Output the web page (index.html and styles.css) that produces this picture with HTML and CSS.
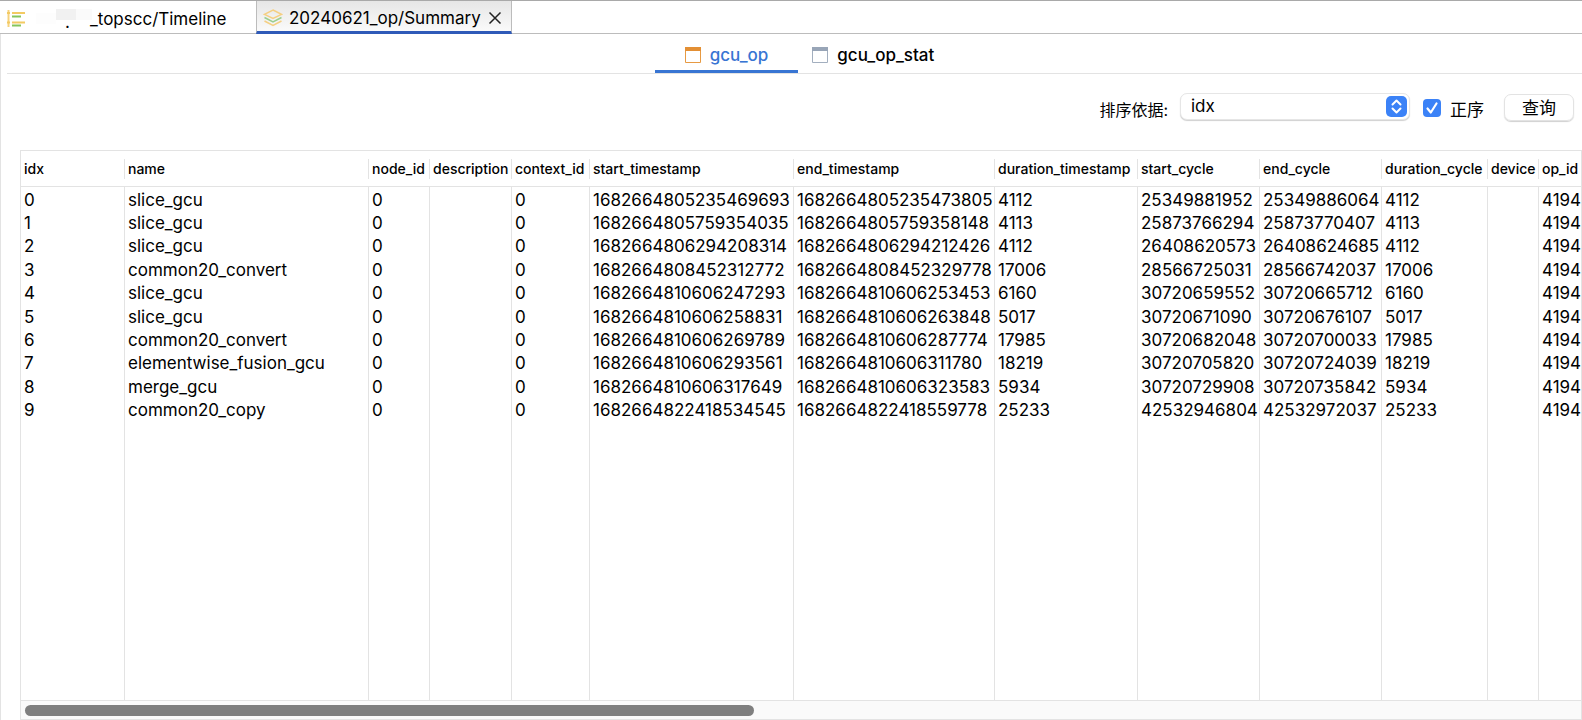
FILE: index.html
```html
<!DOCTYPE html>
<html lang="zh-CN">
<head>
<meta charset="utf-8">
<title>Summary</title>
<link rel="stylesheet" href="styles.css">
</head>
<body>
<nav class="files">
  <div class="file">
    <svg class="file-icon" width="18" height="18" viewBox="0 0 18 18" fill="none" stroke-width="2"><path d="M1.500 0v17" stroke="#f6d27c"/><path d="M0 3h3M5 3h13M0 12.500h3M5 12.500h13" stroke="#f3ca63"/><path d="M5 6.500h9M5 15.500h9" stroke="#86c55d"/></svg>
    <span class="redacted"><span class="patch"></span><span class="dot">.</span></span>
    <button class="file-name" type="button">_topscc/Timeline</button>
  </div>
  <div class="file active">
    <svg class="file-icon" width="20" height="18" viewBox="0 0 20 18" fill="none" stroke-width="1.500"><path d="M10 1l8.500 4.300L10 9.500 1.500 5.300z" stroke="#f5cf82"/><path d="M1.500 8.500L10 13l8.500-4.500" stroke="#9bce8e"/><path d="M1.500 12L10 16.500l8.500-4.500" stroke="#f5cf82"/></svg>
    <button class="file-name" type="button">20240621_op/Summary</button>
    <button class="close" type="button" aria-label="Close"><svg width="14" height="14" viewBox="0 0 14 14" fill="none" stroke="#222" stroke-width="1.500"><path d="M1.500 1.500l11 11M12.500 1.500l-11 11"/></svg></button>
  </div>
</nav>
<main class="panel">
  <nav class="views">
    <button class="view selected" type="button"><svg width="16" height="16" viewBox="0 0 16 16" fill="none"><path d="M.5 1h15v14.500H.5z" stroke="#e79a43"/><path d="M0 0h16v4H0z" fill="#e38f34"/></svg>gcu_op</button>
    <button class="view" type="button"><svg width="16" height="16" viewBox="0 0 16 16" fill="none"><path d="M.5 1h15v14.500H.5z" stroke="#a3afbf"/><path d="M0 0h16v4H0z" fill="#98a5b7"/></svg>gcu_op_stat</button>
  </nav>
  <form class="query">
    <label class="sort-label" for="sort">排序依据:</label>
    <div class="select-box">
      <select id="sort"><option>idx</option></select>
      <svg class="chevrons" width="21" height="21" viewBox="0 0 21 21" fill="none"><rect width="21" height="21" rx="5" fill="#3b82f7"/><path d="M6.500 8.500l4-4 4 4M6.500 12.500l4 4 4-4" stroke="#fff" stroke-width="2" stroke-linecap="round" stroke-linejoin="round"/></svg>
    </div>
    <label class="order"><span class="tick"><input type="checkbox" checked><svg width="18" height="18" viewBox="0 0 18 18" fill="none"><path d="M4.500 9.500l3.300 4L13.500 4.500" stroke="#fff" stroke-width="2.200" stroke-linecap="round" stroke-linejoin="round"/></svg></span>正序</label>
    <button class="submit" type="button">查询</button>
  </form>
  <section class="grid">
    <div class="viewport">
      <table>
        <colgroup><col class="w-idx"><col class="w-name"><col class="w-node"><col class="w-desc"><col class="w-context"><col class="w-start"><col class="w-end"><col class="w-duration"><col class="w-cycle"><col class="w-cycle"><col class="w-dcycle"><col class="w-device"><col class="w-op"></colgroup>
        <thead><tr><th>idx</th><th>name</th><th>node_id</th><th>description</th><th>context_id</th><th>start_timestamp</th><th>end_timestamp</th><th>duration_timestamp</th><th>start_cycle</th><th>end_cycle</th><th>duration_cycle</th><th>device</th><th>op_id</th></tr></thead>
        <tbody>
          <tr><td>0</td><td>slice_gcu</td><td>0</td><td></td><td>0</td><td>1682664805235469693</td><td>1682664805235473805</td><td>4112</td><td>25349881952</td><td>25349886064</td><td>4112</td><td></td><td>4194</td></tr>
          <tr><td>1</td><td>slice_gcu</td><td>0</td><td></td><td>0</td><td>1682664805759354035</td><td>1682664805759358148</td><td>4113</td><td>25873766294</td><td>25873770407</td><td>4113</td><td></td><td>4194</td></tr>
          <tr><td>2</td><td>slice_gcu</td><td>0</td><td></td><td>0</td><td>1682664806294208314</td><td>1682664806294212426</td><td>4112</td><td>26408620573</td><td>26408624685</td><td>4112</td><td></td><td>4194</td></tr>
          <tr><td>3</td><td>common20_convert</td><td>0</td><td></td><td>0</td><td>1682664808452312772</td><td>1682664808452329778</td><td>17006</td><td>28566725031</td><td>28566742037</td><td>17006</td><td></td><td>4194</td></tr>
          <tr><td>4</td><td>slice_gcu</td><td>0</td><td></td><td>0</td><td>1682664810606247293</td><td>1682664810606253453</td><td>6160</td><td>30720659552</td><td>30720665712</td><td>6160</td><td></td><td>4194</td></tr>
          <tr><td>5</td><td>slice_gcu</td><td>0</td><td></td><td>0</td><td>1682664810606258831</td><td>1682664810606263848</td><td>5017</td><td>30720671090</td><td>30720676107</td><td>5017</td><td></td><td>4194</td></tr>
          <tr><td>6</td><td>common20_convert</td><td>0</td><td></td><td>0</td><td>1682664810606269789</td><td>1682664810606287774</td><td>17985</td><td>30720682048</td><td>30720700033</td><td>17985</td><td></td><td>4194</td></tr>
          <tr><td>7</td><td>elementwise_fusion_gcu</td><td>0</td><td></td><td>0</td><td>1682664810606293561</td><td>1682664810606311780</td><td>18219</td><td>30720705820</td><td>30720724039</td><td>18219</td><td></td><td>4194</td></tr>
          <tr><td>8</td><td>merge_gcu</td><td>0</td><td></td><td>0</td><td>1682664810606317649</td><td>1682664810606323583</td><td>5934</td><td>30720729908</td><td>30720735842</td><td>5934</td><td></td><td>4194</td></tr>
          <tr><td>9</td><td>common20_copy</td><td>0</td><td></td><td>0</td><td>1682664822418534545</td><td>1682664822418559778</td><td>25233</td><td>42532946804</td><td>42532972037</td><td>25233</td><td></td><td>4194</td></tr>
          <tr class="filler"><td></td><td></td><td></td><td></td><td></td><td></td><td></td><td></td><td></td><td></td><td></td><td></td><td></td></tr>
        </tbody>
      </table>
    </div>
    <div class="scrollbar"><div class="thumb"></div></div>
  </section>
</main>
</body>
</html>
```
FILE: styles.css
```css
* { box-sizing: border-box; }
body {
  margin: 0;
  height: 100vh;
  display: flex;
  flex-direction: column;
  overflow: hidden;
  background: #fff;
  color: #000;
  font-family: Inter, "Noto Sans CJK SC", sans-serif;
  font-size: 17px;
}
button, select { font: inherit; color: inherit; }
button { padding: 0; border: 0; background: none; }
svg { display: block; flex: none; }

.files {
  flex: none;
  display: flex;
  height: 34px;
  border-top: 1px solid #a9a9a9;
  border-bottom: 1px solid #bcbcbc;
}
.file {
  display: flex;
  align-items: center;
  width: 256px;
  padding: 3px 0 0 7px;
}
.file.active {
  width: 256px;
  margin-bottom: -1px;
  padding: 4px 0 0 6px;
  border: solid #bcbcbc;
  border-width: 0 1px;
  border-bottom: 3px solid #2f5ab8;
  background: linear-gradient(#e6e6e6, #fafafa);
  gap: 6px;
}
.file-name { line-height: 24px; white-space: nowrap; }
.redacted {
  display: flex;
  justify-content: center;
  align-items: flex-end;
  width: 65px;
  height: 20px;
  position: relative;
}
.patch {
  position: absolute;
  top: 0;
  left: 31px;
  width: 20px;
  height: 11px;
  background: #f1f1f1;
  box-shadow: 16px 0 #fafafa, -20px 4px #fdfdfd;
}
.dot { line-height: 14px; padding-left: 20px; }
.close { margin-left: 1px; }

.panel {
  flex: 1;
  min-height: 0;
  display: flex;
  flex-direction: column;
  border-left: 1px solid #e3e3e3;
}
.views {
  flex: none;
  display: flex;
  justify-content: center;
  height: 40px;
  margin-left: 6px;
  padding-left: 14px;
  border-bottom: 1px solid #e3e3e3;
}
.view {
  display: flex;
  align-items: center;
  gap: 9px;
  height: 39px;
  padding: 3px 14px 0;
  font-weight: 500;
}
.view.selected {
  padding: 6px 30px 0 30px;
  border-bottom: 3px solid #3875d3;
  color: #3875d3;
}

.query {
  flex: none;
  display: flex;
  justify-content: flex-end;
  align-items: flex-start;
  padding: 19px 8px 0 0;
  height: 76px;
}
.sort-label { padding-top: 5px; font-size: 16px; line-height: 24px; }
.select-box { position: relative; width: 230px; margin: 0 13px 0 12px; }
.select-box select {
  appearance: none;
  display: block;
  width: 100%;
  height: 27px;
  padding: 0 10px 2px;
  border: 1px solid #e6e6e6;
  border-radius: 7px;
  background: #fff;
  box-shadow: 0 1px 1px #d0d0d0;
}
.chevrons { position: absolute; top: 3px; right: 3px; pointer-events: none; }
.order { display: flex; gap: 9px; padding-top: 5px; line-height: 24px; }
.tick { position: relative; height: 18px; margin-top: 1px; }
.tick input {
  appearance: none;
  display: block;
  width: 18px;
  height: 18px;
  margin: 0;
  border-radius: 4px;
  background: #3b82f7;
}
.tick svg { position: absolute; inset: 0; pointer-events: none; }
.submit {
  width: 70px;
  height: 27px;
  margin: 1px 0 0 20px;
  border: 1px solid #e3e3e3;
  border-radius: 7px;
  box-shadow: 0 1px 1px #d0d0d0;
  line-height: 24px;
}

.grid {
  flex: 1;
  min-height: 0;
  display: flex;
  flex-direction: column;
  margin-left: 19px;
  border: 1px solid #e3e3e3;
}
.viewport { flex: 1; min-height: 0; overflow: hidden; }
table {
  width: 100%;
  height: 100%;
  table-layout: fixed;
  border-collapse: separate;
  border-spacing: 0;
}
.w-idx { width: 104px; }
.w-name { width: 244px; }
.w-node { width: 61px; }
.w-desc { width: 82px; }
.w-context { width: 78px; }
.w-start { width: 204px; }
.w-end { width: 201px; }
.w-duration { width: 143px; }
.w-cycle { width: 122px; }
.w-dcycle { width: 106px; }
.w-device { width: 51px; }
th, td {
  padding: 0 0 0 3px;
  text-align: left;
  white-space: nowrap;
  overflow: hidden;
}
th {
  height: 36px;
  border-bottom: 1px solid #e3e3e3;
  background: linear-gradient(#e3e3e3, #e3e3e3) right 8px / 1px 20px no-repeat;
  font-size: 14px;
  font-weight: 500;
}
td {
  height: 23px;
  padding-top: 2px;
  border-right: 1px solid #e3e3e3;
  line-height: 21px;
}
tr:nth-child(5n + 1) td, tr:nth-child(5n + 4) td { height: 24px; }
th:last-child { background: none; }
td:last-child { border-right: 0; }
tbody .filler td { height: auto; padding: 0; }
.scrollbar {
  flex: none;
  height: 19px;
  padding: 4px;
  border-top: 1px solid #e3e3e3;
  background: #fafafa;
}
.thumb { width: 47%; height: 11px; border-radius: 6px; background: #7f7f7f; }
```
